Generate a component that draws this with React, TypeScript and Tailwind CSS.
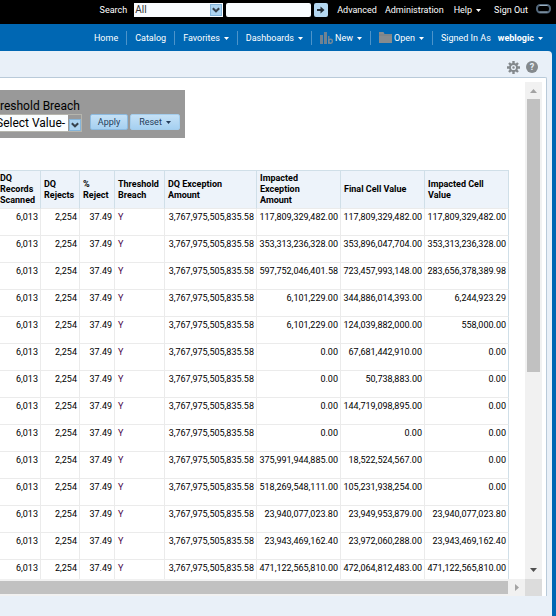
import { JSX } from "react"

/** Columnas: titulo y ancho */
const columns = [
  { title: "DQ\nRecords\nScanned", width: "w-[41px]" },
  { title: "DQ\nRejects", width: "w-[39px]" },
  { title: "%\nReject", width: "w-[35px]" },
  { title: "Threshold\nBreach", width: "w-[50px]" },
  { title: "DQ Exception\nAmount", width: "w-[92px]" },
  { title: "Impacted\nException\nAmount", width: "w-[84px]" },
  { title: "Final Cell Value", width: "w-[84px]" },
  { title: "Impacted Cell\nValue", width: "" },
]

const amounts = [
  ["117,809,329,482.00", "117,809,329,482.00", "117,809,329,482.00"],
  ["353,313,236,328.00", "353,896,047,704.00", "353,313,236,328.00"],
  ["597,752,046,401.58", "723,457,993,148.00", "283,656,378,389.98"],
  ["6,101,229.00", "344,886,014,393.00", "6,244,923.29"],
  ["6,101,229.00", "124,039,882,000.00", "558,000.00"],
  ["0.00", "67,681,442,910.00", "0.00"],
  ["0.00", "50,738,883.00", "0.00"],
  ["0.00", "144,719,098,895.00", "0.00"],
  ["0.00", "0.00", "0.00"],
  ["375,991,944,885.00", "18,522,524,567.00", "0.00"],
  ["518,269,548,111.00", "105,231,938,254.00", "0.00"],
  ["23,940,077,023.80", "23,949,953,879.00", "23,940,077,023.80"],
  ["23,943,469,162.40", "23,972,060,288.00", "23,943,469,162.40"],
  ["471,122,565,810.00", "472,064,812,483.00", "471,122,565,810.00"],
]

const Caret = (): JSX.Element => (
  <svg width="5" height="3" viewBox="0 0 5 3" className="mt-px shrink-0" aria-hidden="true">
    <path d="M0 0h5L2.5 3z" fill="currentColor" />
  </svg>
)

const Divider = () => <span className="h-[14px] w-px shrink-0 bg-[#4d94ca]" />

/** Flecha de los desplegables */
const DropArrow = ({ className }: { className: string }) => (
  <svg viewBox="0 0 12 12" className={className} aria-hidden="true">
    <rect x=".5" y=".5" width="11" height="11" fill="#add4f1" stroke="#85b5da" />
    <path d="M2.8 4.3 6 7.3l3.2-3" fill="none" stroke="#37424d" strokeWidth="2" />
  </svg>
)

/*-----------------------------------------------------------------------------------*/
/** Barra negra superior con el buscador */
const TopBar = () => (
  <header className="flex h-6 shrink-0 items-start justify-end bg-black pr-[5px] pt-[3px] text-white">
    <label htmlFor="scope" className="leading-[14px]">Search</label>
    <div className="relative ml-[7px] h-[14px] w-[89px]">
      <select id="scope" className="block h-full w-full appearance-none bg-[#f9fcff] pl-px text-[10px] leading-[14px] text-[#333]">
        <option>All</option>
      </select>
      <DropArrow className="pointer-events-none absolute right-px top-px h-3 w-3" />
    </div>
    <input aria-label="Search text" className="ml-[3px] h-[14px] w-[85px] rounded-xs bg-[#f9fcff] px-1" />
    <button aria-label="Go" className="ml-[3px] flex h-[14px] w-[14px] items-center justify-center rounded-xs bg-[#b4d7f0]">
      <svg width="8" height="8" viewBox="0 0 8 8" aria-hidden="true">
        <path d="M0 3h3.5V.5L7.5 4l-4 3.5V5H0z" fill="#222c35" />
      </svg>
    </button>
    <a href="#" className="ml-[9px] leading-[14px]">Advanced</a>
    <a href="#" className="ml-2 leading-[14px]">Administration</a>
    <a href="#" className="ml-[10px] flex items-center gap-1 leading-[14px]">Help <Caret /></a>
    <a href="#" className="ml-[13px] leading-[14px]">Sign Out</a>
    <svg width="15" height="10" viewBox="0 0 15 10" className="ml-2 mt-px" aria-hidden="true">
      <rect x="1" y="1" width="13" height="7.5" rx="3.2" fill="none" stroke="#53687c" strokeWidth="2" />
      <path d="M3.5 1.5h8M3.5 8h8" stroke="#9db0c0" />
    </svg>
  </header>
)

const NavBar = () => (
  <nav className="flex h-[27px] shrink-0 items-center justify-end gap-2 pr-[13px] text-white">
    <a href="#">Home</a>
    <Divider />
    <a href="#">Catalog</a>
    <Divider />
    <a href="#" className="flex items-center gap-1">Favorites <Caret /></a>
    <Divider />
    <a href="#" className="flex items-center gap-1">Dashboards <Caret /></a>
    <Divider />
    <a href="#" className="flex items-center gap-1">
      <span className="flex items-center gap-[2px]">
        <svg width="13" height="12" viewBox="0 0 13 12" aria-hidden="true">
          <path d="M0 3h3v9H0zM4 0h3v12H4z" fill="#6f8292" />
          <path d="M8 4h1.5v8H8z" fill="#6f8292" />
          <rect x="8.7" y="7.2" width="3.6" height="4" rx="1.6" fill="none" stroke="#7b8c99" strokeWidth="1.4" />
        </svg>
        New
      </span>
      <Caret />
    </a>
    <Divider />
    <a href="#" className="flex items-center gap-1">
      <span className="flex items-center gap-[2px]">
        <svg width="13" height="11" viewBox="0 0 13 11" aria-hidden="true">
          <path d="M0 0h4.5l1 2H13v9H0z" fill="#878b8e" />
          <path d="M0 3h13" stroke="#737a80" strokeWidth=".6" />
        </svg>
        Open
      </span>
      <Caret />
    </a>
    <Divider />
    <span className="flex items-center gap-[7px]">
      Signed In As
      <a href="#" className="flex items-center gap-1 font-bold">weblogic <Caret /></a>
    </span>
  </nav>
)

/*-----------------------------------------------------------------------------------*/
/** Filtro del informe */
const PromptBar = () => (
  <form className="flex h-12 w-[185px] flex-col overflow-hidden bg-[#999] pt-2" onSubmit={(e) => e.preventDefault()}>
    <label htmlFor="breach" className="text-[12px] leading-4 text-black">reshold Breach</label>
    <div className="flex items-start">
      <div className="relative h-[18px] w-[82px] border-y border-r border-[#b5b5ad] bg-[#999]">
        <select id="breach" className="-ml-1 block h-4 w-[72px] appearance-none bg-[#fbfeff] text-[12px] leading-4 text-black">
          <option>Select Value-</option>
        </select>
        <DropArrow className="pointer-events-none absolute bottom-0 right-0 h-3 w-3" />
      </div>
      <button className="ml-2 h-4 w-[38px] rounded-xs border border-[#8dbbe0] bg-linear-to-b from-[#c5e1f6] to-[#a5d0f1] leading-3 text-[#243c5a]">Apply</button>
      <button className="ml-[2px] flex h-4 w-[50px] items-center justify-center gap-1 rounded-xs border border-[#a4cdec] bg-linear-to-b from-[#c5e1f6] to-[#a5d0f1] text-[#243c5a]">Reset <Caret /></button>
    </div>
  </form>
)

/**
 * @description Renderizado de la tabla de resultados
 */
const ResultTable = () => {
  const num = "border-b border-r border-[#ebebeb] pr-[2px] pt-[2px] text-right align-top whitespace-nowrap"

  return (
    <table className="w-full table-fixed border-separate border-spacing-0 text-left text-black">
      <thead>
        <tr className="h-[39px]">
          {columns.map((c) => (
            <th key={c.title} className={`${c.width} whitespace-pre-line border-r border-t border-b border-[#d0dfe8] border-b-[#ebebeb] bg-[#edf3fa] pl-[3px] align-middle font-bold leading-[11px] first:pl-0`}>
              {c.title}
            </th>
          ))}
        </tr>
      </thead>
      <tbody>
        {amounts.map(([exception, final, impacted], i) => (
          <tr key={i} className="h-[27px]">
            <td className={num}>6,013</td>
            <td className={num}>2,254</td>
            <td className={num}>37.49</td>
            <td className="border-b border-r border-[#ebebeb] pl-[3px] pt-[2px] align-top text-[#4a0a4a]">Y</td>
            <td className={num}>3,767,975,505,835.58</td>
            <td className={num}>{exception}</td>
            <td className={num}>{final}</td>
            <td className={`${num} border-r-[#d0dfe8]`}>{impacted}</td>
          </tr>
        ))}
      </tbody>
    </table>
  )
}

/*-----------------------------------------------------------------------------------*/
const VerticalBar = () => (
  <div className="flex w-[17px] shrink-0 flex-col items-center bg-[#f1f1f1]">
    <svg width="17" height="17" viewBox="0 0 17 17" className="shrink-0"><path d="M5 11 8.5 7l3.5 4z" fill="#a3a3a3" /></svg>
    <div className="h-[55%] w-[13px] bg-[#c1c1c1]" />
    <svg width="17" height="17" viewBox="0 0 17 17" className="mt-auto shrink-0"><path d="M5 6h7l-3.5 4z" fill="#505050" /></svg>
  </div>
)

const HorizontalBar = () => (
  <div className="flex h-[17px] shrink-0 items-center bg-[#f1f1f1]">
    <div className="h-[13px] flex-1 bg-[#c1c1c1]" />
    <svg width="17" height="17" viewBox="0 0 17 17" className="shrink-0"><path d="M7 5v7l4-3.5z" fill="#a3a3a3" /></svg>
    <div className="h-full w-[17px] bg-[#dcdcdc]" />
  </div>
)

export default function App() {
  return (
    <div className="flex h-screen flex-col overflow-hidden bg-[#0067b3] font-[Roboto,sans-serif] text-[9px] leading-3">
      <TopBar />
      <NavBar />
      <main className="mr-1 flex min-h-0 flex-1 flex-col rounded-tr-sm bg-[#e9f0f8] pb-5 pr-[5px]">
        <div className="flex h-[26px] shrink-0 items-center justify-end gap-[6px] pr-[9px] pt-[6px]">
          <button aria-label="Page options" className="text-[#84898d]">
            <svg width="13" height="13" viewBox="0 0 13 13" className="block" aria-hidden="true">
              <g stroke="currentColor" strokeWidth="2.4">
                <path d="M6.5 0v13M0 6.5h13M2 2l9 9M11 2l-9 9" />
              </g>
              <circle cx="6.5" cy="6.5" r="4.5" fill="currentColor" />
              <circle cx="6.5" cy="6.5" r="1.9" fill="#84898d" stroke="#e9f0f8" strokeWidth="1.3" />
            </svg>
          </button>
          <button aria-label="Help" className="flex h-3 w-3 items-center justify-center rounded-full bg-[#84898d] font-bold text-[#e9f0f8]">?</button>
        </div>
        <div className="flex min-h-0 flex-1 flex-col rounded-tr-xs border-r border-t border-[#b9cad9] bg-white pr-1 pt-1">
          <div className="flex min-h-0 flex-1">
            <div className="min-w-0 flex-1 overflow-hidden pr-4 pt-2">
              <PromptBar />
              <div className="mt-8">
                <ResultTable />
              </div>
            </div>
            <VerticalBar />
          </div>
          <HorizontalBar />
        </div>
      </main>
    </div>
  )
}
